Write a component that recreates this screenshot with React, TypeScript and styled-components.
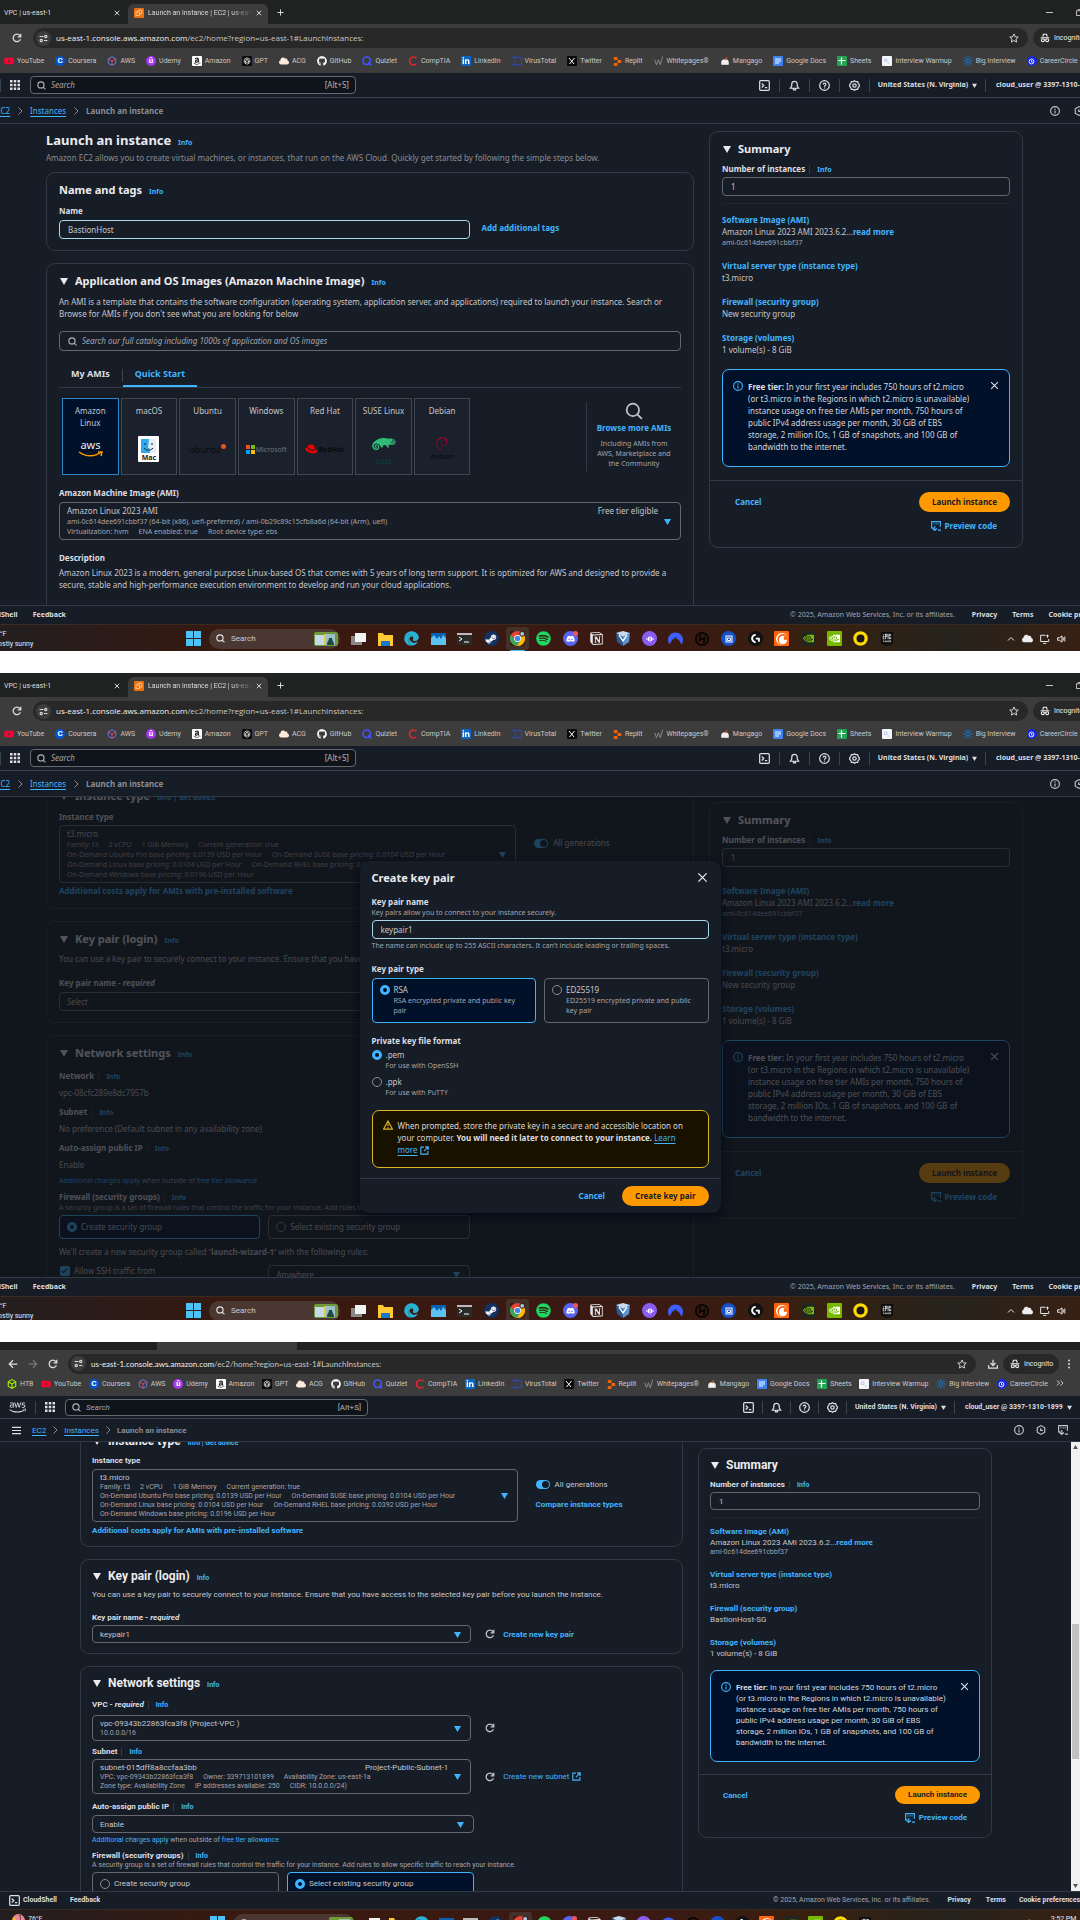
import React from 'react';
import styled, { createGlobalStyle, css, ThemeProvider } from 'styled-components';
import {
  FaYoutube, FaGithub, FaAmazon, FaLinkedinIn, FaAws, FaDiscord, FaSpotify, FaSteamSymbol,
  FaEdge, FaRedhat, FaSuse, FaCloud,
} from 'react-icons/fa';
import { SiNotion, SiCrunchyroll, SiNvidia, SiEpicgames, SiLogitechg, SiDebian, SiNordvpn, SiReplit } from 'react-icons/si';

/* ---------- themes: two browser zoom levels ---------- */

const regular = {
  font: '"Noto Sans", "Open Sans", sans-serif',
  urlFont: '"Open Sans", sans-serif',
  lh: 12, slh: 10, h2: 11, h2lh: 15, ctl: 19, btn: 20, pad: 12, gap: 12,
  cell: 30, region: 116, user: 94, header: 25, crumb: 26, crumbGap: 6,
  factsPad: '10px 0 13px', asidePad: 13,
  pagePad: '0 57px 0 46px', aside: 314, search: 326, taskPad: 186, taskWidth: 709, pill: 131,
};
const compact: typeof regular = {
  font: 'Roboto, "Noto Sans", sans-serif',
  urlFont: 'Lato, sans-serif',
  lh: 11, slh: 9, h2: 12, h2lh: 14, ctl: 18, btn: 18, pad: 11, gap: 12,
  cell: 28, region: 108, user: 125, header: 23, crumb: 23, crumbGap: 5,
  factsPad: '8px 0 11px', asidePad: 12,
  pagePad: '0 79px 0 80px', aside: 294, search: 303, taskPad: 210, taskWidth: 663, pill: 122,
};

const Global = createGlobalStyle`
  *, *::before, *::after { box-sizing: border-box; }
  body { margin: 0; background: #fff; }
  button, input, select { font: inherit; color: inherit; margin: 0; }
  h1, h2, p { margin: 0; }
  svg { display: block; flex: none; }
`;

const link = '#42b4ff';
const line = '#303944';
const ctlLine = '#656871';

/* ---------- icons ---------- */

type IcoProps = { size?: number; children: React.ReactNode; sw?: number; color?: string };
const Ico = ({ size = 10, sw = 2, color = 'currentColor', children }: IcoProps) => (
  <svg width={size} height={size} viewBox="0 0 16 16" fill="none" stroke={color} strokeWidth={sw} aria-hidden="true">{children}</svg>
);
const CloseIcon = ({ size = 10, sw = 2 }) => <Ico size={size} sw={sw}><path d="m2 2 12 12M14 2 2 14" /></Ico>;
const SearchIcon = ({ size = 10, sw = 2 }) => <Ico size={size} sw={sw}><circle cx="7" cy="7" r="5.5" /><path d="m11 11 4 4" /></Ico>;
const TermIcon = () => <Ico size={11} sw={1.8}><rect x="1" y="1" width="14" height="14" rx="1.5" /><path d="m4 5 3 3-3 3M8.500 11H12" /></Ico>;
const BellIcon = () => <Ico size={11} sw={1.8}><path d="M2 12h12l-2-3V6a4 4 0 0 0-8 0v3zM6.500 12.500v2h3v-2" /></Ico>;
const HelpIcon = () => <Ico size={11} sw={1.8}><circle cx="8" cy="8" r="7" /><path d="M6 6.500C6 4 10 4 10 6.500 10 8 8 8 8 9.800M8 11v1.500" /></Ico>;
const GearIcon = () => <Ico size={11} sw={1.8}><path d="m8 1 2 1.500 2.500-.2.800 2.500L15 7v2l-1.700 2.200-.8 2.500-2.500-.2L8 15l-2-1.500-2.500.2-.8-2.500L1 9V7l1.700-2.200.8-2.500 2.500.2z" /><circle cx="8" cy="8" r="2.500" /></Ico>;
const InfoIcon = ({ size = 10 }) => <Ico size={size} sw={1.8}><circle cx="8" cy="8" r="7" /><path d="M8 7v5M8 4v1.800" /></Ico>;
const ClockIcon = () => <Ico size={10} sw={1.8}><path d="m8 1 6 3.500v7L8 15l-6-3.500v-7z" /><path d="M7.500 5v3.500H11" /></Ico>;
const CodeIcon = () => <Ico size={10} sw={1.8}><path d="M4 11H1V1h14v8M6 15V8M2.500 12 6 15l3.500-3M4 4.500h1.500M7.500 4.500H9M10.500 4.500H12M11 14.500h5" /></Ico>;
const GridIcon = () => (
  <svg width="10" height="10" viewBox="0 0 16 16" fill="currentColor" aria-hidden="true">
    {[0, 6, 12].map(y => [0, 6, 12].map(x => <rect key={`${x}-${y}`} x={x} y={y} width="4" height="4" />))}
  </svg>
);
const Chevron = () => <Ico size={8} sw={2}><path d="m5 1 7 7-7 7" /></Ico>;
const Tri = ({ size = 8 }) => <svg width={size} height={size} viewBox="0 0 8 8" fill="currentColor" aria-hidden="true"><path d="M0 1h8L4 8z" /></svg>;
const ReloadIcon = ({ size = 10, sw = 2 }) => <Ico size={size} sw={sw}><path d="M13.500 10A6 6 0 1 1 12.500 4L14 5.500M14 1v5H9" /></Ico>;
const ExtIcon = () => <Ico size={9} sw={2}><path d="M7 2H1.500v12.500H14V9M9 1.500h5.500V7M14 2 7 9" /></Ico>;
const StarIcon = () => <Ico size={10} sw={1.5}><path d="m8 1.500 2 4.600 4.800.4-3.700 3.200 1.200 4.800L8 12l-4.300 2.500 1.200-4.800L1.200 6.500 6 6.100z" /></Ico>;
const TuneIcon = () => <Ico size={9} sw={2}><path d="M1 4.500h7M9 11.500h6" /><circle cx="12" cy="4.500" r="2" /><circle cx="4" cy="11.500" r="2" /></Ico>;
const SpyIcon = () => <Ico size={10} sw={1.8}><path d="M4.500 6 5.500 2h5l1 4M1 7.500h14" /><circle cx="4.500" cy="11.500" r="2.300" /><circle cx="11.500" cy="11.500" r="2.300" /><path d="M6.500 11h3" /></Ico>;
const WarnIcon = () => <Ico size={10} sw={1.8}><path d="M8 1.500 15 14.500H1zM8 6v4M8 11.500V13" /></Ico>;
const DownloadIcon = () => <Ico size={10} sw={2}><path d="M8 1v9M4 6.500 8 10.500l4-4M1 10v4.500h14V10" /></Ico>;

const Dot = styled.span<{ $bg: string; $round?: boolean; $fg?: string }>`
  width: 10px; height: 10px; flex: none;
  display: flex; align-items: center; justify-content: center;
  background: ${p => p.$bg}; color: ${p => p.$fg || '#fff'};
  border-radius: ${p => (p.$round ? '50%' : '1px')};
  font: 700 8px/10px Roboto, sans-serif;
`;

/* ---------- browser chrome ---------- */

const Page = styled.main`display: flex; flex-direction: column; gap: 22px;`;

const Shot = styled.article<{ $h: number }>`
  height: ${p => p.$h}px;
  overflow: hidden;
  display: flex; flex-direction: column;
  background: #161d26; color: #c6c6cd;
  font-family: ${p => p.theme.font};
  font-size: 8px; line-height: ${p => p.theme.lh}px;
  & > * { flex: none; }
`;

const TabStrip = styled.div<{ $h: number; $pad: number }>`
  height: ${p => p.$h}px; overflow: hidden;
  background: #202221; color: #dcdcdc;
  display: flex; align-items: flex-end;
  padding-left: ${p => p.$pad}px;
  font: 7px/10px Roboto, sans-serif;
`;
const Tab = styled.div<{ $active?: boolean }>`
  height: 20px; width: ${p => (p.$active ? 140 : 124)}px; flex: none;
  display: flex; align-items: center; gap: 4px; padding-bottom: 3px;
  border-radius: 6px 6px 0 0;
  background: ${p => (p.$active ? '#3c3c3c' : 'transparent')};
  padding-left: ${p => (p.$active ? 6 : 0)}px;
  padding-right: ${p => (p.$active ? 6 : 8)}px;
`;
const TabTitle = styled.span<{ $fade?: boolean }>`
  flex: 1; min-width: 0; white-space: nowrap; overflow: hidden;
  ${p => p.$fade && css`mask-image: linear-gradient(90deg, #000 80%, transparent);`}
`;
const Bare = styled.button`
  border: 0; padding: 0; background: none; display: flex; align-items: center; justify-content: center; gap: 4px; color: inherit; line-height: inherit; white-space: nowrap;
`;
const NewTab = styled(Bare)`width: 24px; height: 20px; padding-bottom: 3px;`;
const WinButtons = styled.div`margin-left: auto; width: 34px; height: 20px; display: flex; gap: 23px; align-items: center; overflow: hidden; padding-bottom: 3px;`;

const NavRow = styled.div<{ $compact?: boolean }>`
  height: ${p => (p.$compact ? 27 : 28)}px;
  background: #3c3c3c; color: #dcdcdc;
  display: flex; align-items: center; gap: 5px; overflow: hidden;
  padding-left: ${p => (p.$compact ? 8 : 12)}px;
  padding-right: ${p => (p.$compact ? 8 : 0)}px;
`;
const NavButtons = styled.div<{ $w: number; $end?: boolean }>`
  display: flex; gap: 10px; width: ${p => p.$w}px; flex: none; justify-content: ${p => (p.$end ? 'flex-end' : 'flex-start')};
`;
const UrlBar = styled.div`
  flex: 1; min-width: 0; height: 20px; border-radius: 10px; background: #282828;
  display: flex; align-items: center; gap: 5px; padding: 0 9px 0 3px;
`;
const TuneCircle = styled.span`width: 15px; height: 15px; border-radius: 50%; background: #3d3d3d; display: flex; align-items: center; justify-content: center;`;
const UrlText = styled.span`
  flex: 1; color: #c7c7c7; white-space: nowrap; overflow: hidden;
  font: 8px/12px ${p => p.theme.urlFont};
  b { font-weight: 400; color: #f0f0f0; }
`;
const Incognito = styled.span<{ $cut?: boolean }>`
  flex: none; height: 20px; border-radius: 10px; background: #282828;
  display: flex; align-items: center; gap: 4px; padding: 0 7px;
  width: ${p => (p.$cut ? 47 : 56)}px;
  ${p => p.$cut && css`border-radius: 10px 0 0 10px; overflow: hidden;`}
  font: 7px/10px Roboto, sans-serif; color: #ececec;
`;

const Bookmarks = styled.nav<{ $compact?: boolean }>`
  height: ${p => (p.$compact ? 19 : 21)}px; background: #3c3c3c; color: #c9c9c9;
  display: flex; justify-content: space-between; align-items: flex-start;
  padding: ${p => (p.$compact ? '2px 16px 0 7px' : '4px 2px 0 4px')};
  font: 7px/10px Roboto, sans-serif;
`;
const Bookmark = styled.a`display: flex; gap: 3px; align-items: center; color: inherit; text-decoration: none; white-space: nowrap;`;

const marks: [string, React.ReactNode][] = [
  ['YouTube', <FaYoutube size={10} color="#f03" />],
  ['Coursera', <Dot $bg="#0056d2" $round>C</Dot>],
  ['AWS', <Ico sw={1.6} color="#5b7be8"><path d="m8 1 6 3.500v7L8 15l-6-3.500v-7z" /><path stroke="#e0455e" d="M2 4.500 8 8l6-3.500M8 8v7" /></Ico>],
  ['Udemy', <Dot $bg="#a435f0" $round>û</Dot>],
  ['Amazon', <Dot $bg="#fff" $fg="#111"><FaAmazon size={8} /></Dot>],
  ['GPT', <Dot $bg="#0c0c0c" $fg="#ddd"><Ico size={8} sw={1.5}><path d="m8 1.500 5.500 3.200v6.600L8 14.500l-5.500-3.200V4.700zM5 3.500 11 7v6M11 3.500 5 7v6M2.500 8 8 11l5.500-3" /></Ico></Dot>],
  ['ACG', <FaCloud size={10} color="#ffe9db" />],
  ['GitHub', <FaGithub size={10} color="#fff" />],
  ['Quizlet', <Ico color="#4255ff" sw={2.5}><circle cx="7.500" cy="7.500" r="6" /><path d="m10 10 4.500 5" /></Ico>],
  ['CompTIA', <Ico color="#e0262d" sw={2.5}><path d="M13.500 3.500A6.500 6.500 0 1 0 13.500 12.500" /></Ico>],
  ['LinkedIn', <Dot $bg="#0a66c2"><FaLinkedinIn size={8} /></Dot>],
  ['VirusTotal', <Ico color="#2a49c9" sw={1.6}><path d="M1 2h14v12H1l6-6z" /></Ico>],
  ['Twitter', <Dot $bg="#0a0a0a"><Ico size={8} color="#fff" sw={2}><path d="m2 2 10 12M13 2 3 14" /></Ico></Dot>],
  ['Replit', <SiReplit size={9} color="#f26207" />],
  ['Whitepages®', <Ico color="#8d8d8d" sw={1.5}><path d="m1 6 3 8 3-8 3 8 4-13" /></Ico>],
  ['Mangago', <Ico color="#eee" sw={2}><path fill="#f6efe9" d="M3 10a5 4 0 0 1 10 0v3H3z" /><path stroke="#e0532b" d="m8 6 3-4" /></Ico>],
  ['Google Docs', <Dot $bg="#3f83f2"><Ico size={8} color="#fff" sw={2}><path d="M2 4h12M2 8h12M2 12h8" /></Ico></Dot>],
  ['Sheets', <Dot $bg="#23a455"><Ico size={8} color="#fff" sw={2.4}><path d="M1 7h14M7 1v14" /></Ico></Dot>],
  ['Interview Warmup', <Dot $bg="#f4f6fa"><Ico size={8} color="#b9cdf0" sw={2}><path d="M3 4h5v5H3zM9 12h4" /></Ico></Dot>],
  ['Big Interview', <Ico color="#1574c4" sw={1.8}><circle cx="8" cy="8" r="3" /><path d="M8 0v3M8 13v3M0 8h3M13 8h3M2.500 2.500l2 2M11.500 11.500l2 2M13.500 2.500l-2 2M4.500 11.500l-2 2" /></Ico>],
  ['CareerCircle', <Dot $bg="#1626e0" $round><Ico size={7} color="#fff" sw={2}><circle cx="8" cy="8" r="5.500" /><path d="M8 5v4h3" /></Ico></Dot>],
];

const Chrome = ({ small }: { small?: boolean }) => (
  <>
    <TabStrip $h={small ? 8 : 24} $pad={small ? 33 : 4}>
      <Tab>
        {!small && <><TabTitle>VPC | us-east-1</TabTitle><Bare aria-label="Close tab"><CloseIcon size={6} sw={2.5} /></Bare></>}
      </Tab>
      <Tab $active>
        {!small && (
          <>
            <Dot $bg="#ec7211"><Ico size={8} color="#ffd9a8" sw={1.5}><rect x="2" y="6" width="7" height="7" /><path d="M6 6V2.500h7.500V10H9" /></Ico></Dot>
            <TabTitle $fade>Launch an instance | EC2 | us-east-1</TabTitle>
            <Bare aria-label="Close tab"><CloseIcon size={6} sw={2.5} /></Bare>
          </>
        )}
      </Tab>
      {!small && (
        <>
          <NewTab aria-label="New tab"><Ico size={7} sw={2.2}><path d="M8 1v14M1 8h14" /></Ico></NewTab>
          <WinButtons><Ico size={7} sw={2}><path d="M0 8h16" /></Ico><Ico size={7} sw={2}><path d="M1 4h11v11H1zM4 1h11v11" /></Ico></WinButtons>
        </>
      )}
    </TabStrip>
    <NavRow $compact={small}>
      <NavButtons $w={small ? 55 : 16}>
        {small && <><Bare aria-label="Back"><Ico><path d="M15 8H2M8 2 2 8l6 6" /></Ico></Bare><Bare aria-label="Forward"><Ico color="#777"><path d="M1 8h13M8 2l6 6-6 6" /></Ico></Bare></>}
        <Bare aria-label="Reload"><ReloadIcon /></Bare>
      </NavButtons>
      <UrlBar>
        <TuneCircle><TuneIcon /></TuneCircle>
        <UrlText><b>us-east-1.console.aws.amazon.com</b>/ec2/home?region=us-east-1#LaunchInstances:</UrlText>
        <StarIcon />
      </UrlBar>
      {small && <NavButtons $w={17} $end><Bare aria-label="Downloads"><DownloadIcon /></Bare></NavButtons>}
      <Incognito $cut={!small}><SpyIcon />Incognito</Incognito>
      {small && <Bare aria-label="Menu"><svg width="8" height="10" viewBox="0 0 8 10" fill="currentColor"><circle cx="5" cy="1.500" r="1" /><circle cx="5" cy="5" r="1" /><circle cx="5" cy="8.500" r="1" /></svg></Bare>}
    </NavRow>
    <Bookmarks $compact={small} aria-label="Bookmarks">
      {small && <Bookmark href="#"><Ico color="#9fef00" sw={1.8}><path d="m8 1 6 3.500v7L8 15l-6-3.500v-7zM2 4.500 8 8l6-3.500M8 8v7" /></Ico>HTB</Bookmark>}
      {marks.map(([name, icon]) => <Bookmark key={name} href="#">{icon}{name}</Bookmark>)}
      {small && <Bookmark href="#" aria-label="More"><Ico size={8}><path d="m2 3 5 5-5 5M9 3l5 5-5 5" /></Ico></Bookmark>}
    </Bookmarks>
  </>
);

/* ---------- console header ---------- */

const Header = styled.header`
  height: ${p => p.theme.header}px; border-bottom: 1px solid #3b434e;
  display: flex; align-items: center; overflow: hidden; color: #dedee3;
`;
const HeaderLeft = styled.div<{ $w: number }>`width: ${p => p.$w}px; flex: none; display: flex; align-items: center; justify-content: flex-end; gap: 9px; padding-right: 10px;`;
const Rule = styled.span`width: 1px; height: 13px; background: #3b434e; flex: none;`;
const SearchBox = styled.label`
  width: ${p => p.theme.search}px; height: ${p => p.theme.ctl - 1}px; flex: none;
  border: 1px solid ${ctlLine}; border-radius: 4px; background: #0f141a;
  display: flex; align-items: center; gap: 5px; padding: 0 6px; color: #b4b4bb;
  input { flex: 1; min-width: 0; border: 0; padding: 0; background: none; outline: 0; }
  input::placeholder { color: #a4a4ad; font-style: italic; opacity: 1; }
`;
const HeaderRight = styled.div`margin-left: auto; display: flex; align-items: center; font-size: 7px; font-weight: 700; flex: none;`;
const IconCell = styled(Bare)`width: ${p => p.theme.cell}px; height: 13px; border-right: 1px solid #3b434e;`;
const RegionCell = styled(Bare)`width: ${p => p.theme.region}px; height: 13px; border-right: 1px solid #3b434e; font-weight: 700;`;
const UserCell = styled(Bare)`width: ${p => p.theme.user}px; height: 13px; justify-content: flex-start; padding-left: 10px; overflow: hidden; font-weight: 700;`;

const Crumbs = styled.nav<{ $cut?: boolean }>`
  height: ${p => p.theme.crumb}px; border-bottom: 1px solid #303944;
  display: flex; align-items: center; gap: ${p => p.theme.crumbGap}px; color: #8c8c94; font-weight: 700; overflow: hidden; white-space: nowrap;
  padding: ${p => (p.$cut ? '0' : '0 12px')};
`;
const CrumbLink = styled.a<{ $cut?: boolean }>`
  color: ${link}; font-weight: 400; text-decoration: underline; text-underline-offset: 2px; flex: none;
  margin-left: ${p => (p.$cut ? -4 : 0)}px;
`;
const MenuButton = styled(Bare)`color: #dedee3; margin-right: 6px;`;
const CrumbTools = styled.div<{ $cut?: boolean }>`margin-left: auto; display: flex; gap: ${p => (p.$cut ? 14 : 12)}px; color: #c6c6cd; width: ${p => (p.$cut ? 30 : 54)}px;`;

const ConsoleHeader = ({ small }: { small?: boolean }) => (
  <>
    <Header>
      <HeaderLeft $w={small ? 65 : 30}>{small && <><FaAws size={17} /><Rule /></>}{!small && <Rule />}<GridIcon /></HeaderLeft>
      <SearchBox><SearchIcon size={9} /><input type="search" placeholder="Search" aria-label="Search services" />[Alt+S]</SearchBox>
      <HeaderRight>
        <IconCell aria-label="CloudShell"><TermIcon /></IconCell>
        <IconCell aria-label="Notifications"><BellIcon /></IconCell>
        <IconCell aria-label="Help"><HelpIcon /></IconCell>
        <IconCell aria-label="Settings"><GearIcon /></IconCell>
        <RegionCell>United States (N. Virginia) <Tri size={5} /></RegionCell>
        <UserCell>cloud_user @ 3397-1310-1899 <Tri size={5} /></UserCell>
      </HeaderRight>
    </Header>
    <Crumbs $cut={!small} aria-label="Breadcrumb">
      {small && <MenuButton aria-label="Open menu"><Ico size={9}><path d="M0 2.500h16M0 8h16M0 13.500h16" /></Ico></MenuButton>}
      <CrumbLink href="#" $cut={!small}>EC2</CrumbLink><Chevron /><CrumbLink href="#">Instances</CrumbLink><Chevron />Launch an instance
      <CrumbTools $cut={!small}><InfoIcon /><ClockIcon />{small && <CodeIcon />}</CrumbTools>
    </Crumbs>
  </>
);

/* ---------- page parts ---------- */

const Viewport = styled.div<{ $h: number }>`height: ${p => p.$h}px; overflow: hidden; display: flex; position: relative;`;
const Content = styled.div`flex: 1; min-width: 0; display: flex; align-items: flex-start; gap: 15px; padding: ${p => p.theme.pagePad};`;
const MainCol = styled.div<{ $scroll?: number }>`
  flex: 1; min-width: 0; display: flex; flex-direction: column; gap: ${p => p.theme.gap}px;
  margin-top: ${p => -(p.$scroll || 0)}px;
`;
const Card = styled.section`
  border: 1px solid ${line}; border-radius: 9px; padding: 9px ${p => p.theme.pad}px ${p => p.theme.pad - 1}px;
`;
const TitleBlock = styled.div`padding-top: 7px; margin-bottom: -4px;`;
const H1 = styled.h1`font-size: 13px; line-height: 18px; color: #ebebf0; padding-bottom: 3px;`;
const H2 = styled.h2`
  display: flex; align-items: baseline; gap: 7px;
  font-size: ${p => p.theme.h2}px; line-height: ${p => p.theme.h2lh}px; color: #ebebf0; font-weight: 700;
`;
const TriWrap = styled.span`padding-left: 1px; display: flex; align-self: center;`;
const Info = styled.a`color: ${link}; font-size: 7px; line-height: 10px; font-weight: 700; text-decoration: none;`;
const InfoSep = styled(Info)`border-left: 1px solid ${line}; margin-left: 4px; padding-left: 7px;`;
const Label = styled.label`display: block; font-weight: 700; color: #dedee3; white-space: nowrap;`;
const Blue = styled.a<{ $bold?: boolean; $under?: boolean }>`
  color: ${link}; text-decoration: ${p => (p.$under ? 'underline' : 'none')}; text-underline-offset: 2px;
  font-weight: ${p => (p.$bold ? 700 : 400)}; white-space: nowrap;
`;
const Small = styled.p`font-size: 7px; line-height: ${p => p.theme.slh}px; color: #a4a4ad; white-space: nowrap;`;
const Stack = styled.div<{ $gap: number; $top?: number }>`display: flex; flex-direction: column; gap: ${p => p.$gap}px; padding-top: ${p => p.$top || 0}px;`;
const Row = styled.div<{ $gap: number; $start?: boolean }>`display: flex; align-items: ${p => (p.$start ? 'flex-start' : 'center')}; gap: ${p => p.$gap}px;`;
const Text = styled.p<{ $dim?: boolean }>`color: ${p => (p.$dim ? '#8c8c94' : 'inherit')};`;
const TextInput = styled.input<{ $focus?: boolean }>`
  width: 100%; height: ${p => p.theme.ctl}px; border-radius: 4px; outline: 0; background: #161d26;
  border: 1px solid ${p => (p.$focus ? '#a8d8ea' : ctlLine)}; padding: 0 8px; line-height: 12px;
`;
const Part = styled.div<{ $pct: number }>`width: ${p => p.$pct}%; flex: none;`;
const SelectWrap = styled.div`
  display: flex; align-items: center; border: 1px solid ${ctlLine}; border-radius: 4px;
  height: ${p => p.theme.ctl}px; padding-right: 9px; color: ${link};
`;
const NativeSelect = styled.select<{ $placeholder?: boolean }>`
  appearance: none; flex: 1; min-width: 0; border: 0; background: none; outline: 0; padding: 0 7px; color: #c6c6cd;
  font-style: ${p => (p.$placeholder ? 'italic' : 'normal')};
`;
const RichSelect = styled.button`
  width: 100%; display: flex; align-items: center; text-align: left; background: none;
  border: 1px solid ${ctlLine}; border-radius: 4px; padding: 2px 9px 2px 7px; line-height: inherit; color: ${link};
`;
const RichBody = styled.span`flex: 1; color: #c6c6cd; display: block;`;
const RichTop = styled.span`display: flex; justify-content: space-between; padding-right: 6px;`;
const RichLine = styled.span`display: flex; gap: 10px; font-size: 7px; line-height: ${p => p.theme.slh}px; color: #a4a4ad; white-space: nowrap;`;

const Picker = ({ id, options, placeholder }: { id: string; options: string[]; placeholder?: boolean }) => (
  <SelectWrap><NativeSelect id={id} $placeholder={placeholder}>{options.map(o => <option key={o}>{o}</option>)}</NativeSelect><Tri size={7} /></SelectWrap>
);

const Rich = ({ top, right, lines, label }: { top: string; right?: string; lines: string[][]; label: string }) => (
  <RichSelect type="button" aria-haspopup="listbox" aria-label={label}>
    <RichBody>
      <RichTop><span>{top}</span>{right && <span>{right}</span>}</RichTop>
      {lines.map((l, i) => <RichLine key={i}>{l.map(s => <span key={s}>{s}</span>)}</RichLine>)}
    </RichBody>
    <Tri size={7} />
  </RichSelect>
);

const RadioCard = styled.label<{ $on?: boolean; $tall?: boolean }>`
  flex: 1; display: flex; align-items: flex-start; gap: 4px; padding: 5px 7px ${p => (p.$tall ? 6 : 4)}px; border-radius: 4px; min-height: 24px;
  border: 1px solid ${p => (p.$on ? link : ctlLine)}; background: ${p => (p.$on ? '#001129' : 'transparent')};
`;
const Radio = styled.input.attrs({ type: 'radio' })`
  appearance: none; flex: none; width: 10px; height: 10px; margin: 1px 0 0; border-radius: 50%;
  border: 1px solid #8c8c94;
  &:checked { border: 3px solid ${link}; background: #001129; }
`;
const Check = styled.input.attrs({ type: 'checkbox' })`
  appearance: none; width: 10px; height: 10px; border-radius: 2px; background: ${link}; flex: none;
  &::after { content: ''; display: block; width: 3px; height: 6px; margin: 1px 3px; border: solid #001129; border-width: 0 1px 1px 0; transform: rotate(45deg); }
`;
const Toggle = styled.input.attrs({ type: 'checkbox' })`
  appearance: none; width: 14px; height: 9px; border-radius: 5px; background: ${link}; flex: none; padding: 1px;
  &::after { content: ''; display: block; width: 7px; height: 7px; margin-left: 5px; border-radius: 50%; background: #0f1b2a; }
`;

/* ---------- summary ---------- */

const Aside = styled.aside<{ $top: number }>`
  width: ${p => p.theme.aside}px; flex: none; margin-top: ${p => p.$top}px;
  border: 1px solid ${line}; border-radius: 9px;
`;
const AsideBody = styled.div`padding: 9px ${p => p.theme.pad}px ${p => p.theme.asidePad}px;`;
const Facts = styled.div`border-top: 1px solid #1e2630; margin-top: 7px; padding: ${p => p.theme.factsPad}; display: flex; flex-direction: column; gap: 12px;`;
const Alert = styled.div<{ $warn?: boolean }>`
  border: 1px solid ${p => (p.$warn ? '#dbb723' : link)}; background: ${p => (p.$warn ? '#191100' : '#001129')};
  border-radius: 7px; padding: ${p => (p.$warn ? '9px 10px 11px' : '11px 10px 13px')};
  display: flex; align-items: flex-start; gap: 5px; color: ${p => (p.$warn ? '#dbb723' : link)};
`;
const AlertText = styled.p`flex: 1; color: #d6d6dc; b { color: #dedee3; }`;
const AlertClose = styled(Bare)`color: #dedee3; width: 9px;`;
const AsideFoot = styled.div`
  border-top: 1px solid ${line}; padding: 11px ${p => p.theme.pad}px ${p => p.theme.asidePad + 2}px;
  display: flex; justify-content: space-between; align-items: flex-start;
`;
const FootRight = styled.div`display: flex; flex-direction: column; align-items: flex-end; gap: 8px;`;
const TextButton = styled(Bare)`color: ${link}; font-weight: 700; padding: 0 13px; height: ${p => p.theme.btn}px;`;
const CodeButton = styled(Bare)`color: ${link}; font-weight: 700; padding: 0 13px;`;
const Primary = styled.button`
  height: ${p => p.theme.btn}px; border: 0; border-radius: 10px; background: #f90; color: #161d26; font-weight: 700; padding: 0 13px; line-height: 12px; white-space: nowrap;
`;

const Summary = ({ id, group, top }: { id: string; group: string; top: number }) => (
  <Aside $top={top}>
    <AsideBody>
      <H2><TriWrap><Tri /></TriWrap>Summary</H2>
      <Stack $gap={2} $top={7}>
        <Label htmlFor={id}>Number of instances<InfoSep href="#">Info</InfoSep></Label>
        <TextInput id={id} defaultValue="1" />
      </Stack>
      <Facts>
        <div><Blue href="#" $bold>Software Image (AMI)</Blue><Text>Amazon Linux 2023 AMI 2023.6.2...<Blue href="#" $bold>read more</Blue></Text><Small>ami-0c614dee691cbbf37</Small></div>
        <div><Blue href="#" $bold>Virtual server type (instance type)</Blue><Text>t3.micro</Text></div>
        <div><Blue href="#" $bold>Firewall (security group)</Blue><Text>{group}</Text></div>
        <div><Blue href="#" $bold>Storage (volumes)</Blue><Text>1 volume(s) - 8 GiB</Text></div>
      </Facts>
      <Alert>
        <InfoIcon />
        <AlertText>
          <b>Free tier:</b> In your first year includes 750 hours of t2.micro<br />
          (or t3.micro in the Regions in which t2.micro is unavailable)<br />
          instance usage on free tier AMIs per month, 750 hours of<br />
          public IPv4 address usage per month, 30 GiB of EBS<br />
          storage, 2 million IOs, 1 GB of snapshots, and 100 GB of<br />
          bandwidth to the internet.
        </AlertText>
        <AlertClose aria-label="Dismiss"><CloseIcon size={9} /></AlertClose>
      </Alert>
    </AsideBody>
    <AsideFoot>
      <TextButton>Cancel</TextButton>
      <FootRight><Primary>Launch instance</Primary><CodeButton><CodeIcon /> Preview code</CodeButton></FootRight>
    </AsideFoot>
  </Aside>
);

/* ---------- footer and taskbar ---------- */

const Footer = styled.footer<{ $h: number }>`
  height: ${p => p.$h}px; border-top: 1px solid ${line}; display: flex; align-items: center; overflow: hidden;
  font-size: 7px; white-space: nowrap; color: #a4a4ad;
`;
const FootLink = styled.a<{ $ml: number }>`color: #dedee3; font-weight: 700; text-decoration: none; margin-left: ${p => p.$ml}px; display: flex; align-items: center; gap: 3px; flex: none;`;
const FootEnd = styled.div<{ $w: number }>`margin-left: auto; width: ${p => p.$w}px; display: flex; overflow: hidden;`;

const ConsoleFooter = ({ small, h }: { small?: boolean; h: number }) => (
  <Footer $h={h}>
    <FootLink href="#" $ml={small ? 9 : -19}>{small && <TermIcon />}CloudShell</FootLink>
    <FootLink href="#" $ml={small ? 13 : 15}>Feedback</FootLink>
    <FootEnd $w={small ? 307 : 290}>
      © 2025, Amazon Web Services, Inc. or its affiliates.
      <FootLink href="#" $ml={17}>Privacy</FootLink>
      <FootLink href="#" $ml={15}>Terms</FootLink>
      <FootLink href="#" $ml={small ? 13 : 15}>Cookie preferences</FootLink>
    </FootEnd>
  </Footer>
);

const TaskbarBox = styled.div`
  height: 28px; display: flex; align-items: center; color: #e8e8e8; overflow: hidden;
  background: linear-gradient(90deg, #231e20 0%, #38190f 22%, #3a1a13 62%, #38200f 75%, #26231d 88%, #382013 100%);
  font: 7px/10px Roboto, sans-serif; border-top: 1px solid #3a2a22;
`;
const Weather = styled.div<{ $cut?: boolean }>`
  width: ${p => p.theme.taskPad}px; flex: none; white-space: nowrap; display: flex; gap: 3px; line-height: 10px;
  padding-left: ${p => (p.$cut ? 0 : 12)}px; overflow: hidden;
`;
const WeatherText = styled.span<{ $cut?: boolean }>`margin-left: ${p => (p.$cut ? -8 : 0)}px;`;
const WeatherTemp = styled.span<{ $cut?: boolean }>`display: block;`;
const SunBadge = styled.span`width: 13px; height: 13px; border-radius: 50%; background: linear-gradient(45deg, #f5b52a 45%, #f2868c 45%); color: #222; text-align: right; padding-right: 3px; line-height: 9px;`;
const TaskIcons = styled.div`width: ${p => p.theme.taskWidth}px; flex: none; display: flex; align-items: center; justify-content: space-between;`;
const TaskLead = styled.div`display: flex; align-items: center; gap: 8px;`;
const TaskSearch = styled.label`
  width: ${p => p.theme.pill}px; height: 20px; border-radius: 10px; background: #4b3732; display: flex; align-items: center; gap: 6px; padding: 0 2px 0 7px; overflow: hidden;
  input { flex: 1; min-width: 0; border: 0; padding: 0; background: none; outline: 0; font: 8px/10px Roboto, sans-serif; }
  input::placeholder { color: #cfcaca; opacity: 1; }
`;
const AppButton = styled.button<{ $bg?: string; $fg?: string; $round?: boolean; $open?: boolean }>`
  width: 15px; height: 15px; border: 0; padding: 0; flex: none; display: flex; align-items: center; justify-content: center;
  background: ${p => p.$bg || 'transparent'}; color: ${p => p.$fg || '#fff'}; border-radius: ${p => (p.$round ? '50%' : '1px')};
  box-shadow: ${p => (p.$open ? '0 0 0 4px #45302a, 0 5px 0 0 #4cc2f7' : 'none')};
`;
const Tray = styled.div<{ $w: number }>`margin-left: auto; width: ${p => p.$w}px; flex: none; display: flex; align-items: center; gap: 7px; overflow: hidden; white-space: nowrap;`;
const Clock = styled.span`margin-left: 4px; text-align: right;`;

const apps: { name: string; icon: React.ReactNode; bg?: string; fg?: string; round?: boolean; open?: boolean }[] = [
  { name: 'Task view', icon: <svg width="15" height="14" viewBox="0 0 15 14"><rect x="0" y="4" width="11" height="9" fill="#8a8686" /><rect x="4" y="1" width="11" height="9" fill="#f2f2f2" /></svg> },
  { name: 'Explorer', icon: <svg width="15" height="14" viewBox="0 0 15 14"><path d="M0 1h5l1 2h9v11H0z" fill="#ffc933" /><path d="M3 9h9v5H3z" fill="#1577c9" /></svg> },
  { name: 'Edge', icon: <FaEdge size={15} />, fg: '#27b3d8' },
  { name: 'Monitor', icon: <svg width="15" height="12" viewBox="0 0 15 12"><rect width="15" height="12" fill="#0b5fb3" /><path d="M0 12V5l3-3 3 4 2-3 2 3 2-4 3 3v7z" fill="#5cc2f2" /></svg> },
  { name: 'Terminal', icon: <svg width="15" height="12" viewBox="0 0 15 12"><rect width="15" height="12" fill="#2b2b2b" /><rect width="15" height="2" fill="#bbb" /><path d="m2 4 3 2-3 2M7 9h5" stroke="#fff" fill="none" /></svg> },
  { name: 'Steam', icon: <FaSteamSymbol size={12} />, bg: '#12315e', round: true },
  { name: 'Chrome', icon: <svg width="15" height="15" viewBox="0 0 16 16"><circle cx="8" cy="8" r="8" fill="#ea4335" /><path d="M1 4a8 8 0 0 0 6.500 12L11 10H5z" fill="#34a853" /><path d="M8 4.500h7.200A8 8 0 0 1 7.500 16L11 10z" fill="#fbbc05" /><circle cx="8" cy="8" r="3.700" fill="#fff" /><circle cx="8" cy="8" r="2.900" fill="#4285f4" /><circle cx="13" cy="3" r="3" fill="#29323a" /><circle cx="13" cy="3" r="2" fill="#b9c7cf" /></svg>, open: true },
  { name: 'Spotify', icon: <FaSpotify size={15} />, fg: '#1ed760' },
  { name: 'Discord', icon: <svg width="15" height="15" viewBox="0 0 15 15"><circle cx="7.500" cy="7.500" r="7.500" fill="#5865f2" /><g transform="translate(3 3.500)"><FaDiscord size={9} color="#fff" /></g><circle cx="12.500" cy="2.500" r="2.500" fill="#f0575c" /></svg> },
  { name: 'Notion', icon: <SiNotion size={13} />, fg: '#e8e8e8' },
  { name: 'VirtualBox', icon: <svg width="14" height="15" viewBox="0 0 14 15"><path d="M0 2 7 0l7 2-7 4z" fill="#c4dcf3" /><path d="M0 2l7 4v9L1 11z" fill="#2a5a96" /><path d="M14 2 7 6v9l6-4z" fill="#5f92cc" /><path d="M3 4l4 6 4-6" stroke="#eef5fc" strokeWidth="1.500" fill="none" /></svg> },
  { name: 'Recorder', icon: <Ico size={8}><path d="M2 6v4M5 4v8M8 2v12M11 4v8M14 6v4" /></Ico>, bg: '#8b5cf0', round: true },
  { name: 'NordVPN', icon: <SiNordvpn size={15} />, fg: '#3e5fff' },
  { name: 'Hashcat', icon: <Ico size={14} color="#050505"><circle cx="8" cy="8" r="7" /><path d="M6 3 5 11M11 5l-1 8M5 9l6-2" /></Ico> },
  { name: 'Files', icon: <Ico size={8}><rect x="2" y="2" width="12" height="12" /><path d="M5 6h6v5H5z" /></Ico>, bg: '#1550c8', round: true },
  { name: 'Logitech', icon: <SiLogitechg size={9} />, bg: '#111', round: true },
  { name: 'Crunchyroll', icon: <SiCrunchyroll size={12} />, bg: '#ff640a' },
  { name: 'GeForce', icon: <SiNvidia size={11} />, bg: '#23261f', fg: '#76b900' },
  { name: 'Nvidia', icon: <SiNvidia size={11} />, bg: '#76b900' },
  { name: 'Ring', icon: <Ico size={15} color="#ffd900" sw={3.5}><circle cx="8" cy="8" r="6" /></Ico>, bg: '#161616', round: true },
  { name: 'Epic', icon: <SiEpicgames size={14} />, fg: '#0c0c0c', bg: 'radial-gradient(#ddd 50%, transparent 55%)' },
];

const SearchArt = () => (
  <svg width="24" height="14" viewBox="0 0 24 14"><rect width="24" height="14" rx="2" fill="#6f9a3c" /><rect x="1" y="3" width="9" height="10" fill="#c3dbe8" /><rect x="12" y="2" width="9" height="11" fill="#9cc0c8" /><path d="M13 13c0-4 2-4 2-7h3c0 3 2 3 2 7z" fill="#1d4a40" /><path d="M10 2h2v11h-2z" fill="#e3c64a" /></svg>
);

const Taskbar = ({ small }: { small?: boolean }) => (
  <TaskbarBox>
    <Weather $cut={!small}>
      {small && <SunBadge>1</SunBadge>}
      <WeatherText $cut={!small}>
        <WeatherTemp>76°F</WeatherTemp>
        Mostly sunny
      </WeatherText>
    </Weather>
    <TaskIcons>
      <TaskLead>
        <AppButton aria-label="Start"><svg width="15" height="15" viewBox="0 0 15 15" fill="#4cc2f7"><path d="M0 0h7v7H0zM8 0h7v7H8zM0 8h7v7H0zM8 8h7v7H8z" /></svg></AppButton>
        <TaskSearch><SearchIcon size={9} /><input placeholder="Search" aria-label="Search Windows" /><SearchArt /></TaskSearch>
      </TaskLead>
      {apps.map(a => <AppButton key={a.name} aria-label={a.name} $bg={a.bg} $fg={a.fg} $round={a.round} $open={a.open}>{a.icon}</AppButton>)}
    </TaskIcons>
    <Tray $w={small ? 70 : 73}>
      <Ico size={8}><path d="m2 11 6-6 6 6" /></Ico>
      <FaCloud size={11} color="#eee" />
      {!small && <Ico size={10} sw={1.6}><path d="M9 2H1v10h13V8M5 15h5M12 1v5M10 3h4" /></Ico>}
      {!small && <Ico size={10} sw={1.6}><path d="M1 6v4h3l4 3V3L4 6zM10 5.500v5M12.500 4v8" /></Ico>}
      {small && <Clock>3:52 PM<br />4/2/2025</Clock>}
    </Tray>
  </TaskbarBox>
);

/* ---------- first screen ---------- */

const Tabs = styled.div`display: flex; align-items: center; border-bottom: 1px solid ${line}; margin-top: 12px;`;
const TabBtn = styled.button<{ $on?: boolean }>`
  height: 24px; padding: 0 12px; border: 0; background: none; font-weight: 700; font-size: 9px; line-height: 12px; white-space: nowrap;
  color: ${p => (p.$on ? link : '#dedee3')};
  border-bottom: 2px solid ${p => (p.$on ? link : 'transparent')};
`;
const OsRow = styled.div`display: flex; justify-content: space-between; align-items: center; padding: 10px 0 0 3px;`;
const OsTiles = styled.div`display: flex; gap: 2px; width: 66%;`;
const OsTile = styled.button<{ $on?: boolean }>`
  flex: 1 1 0; min-width: 0; height: 77px; padding: 6px 0 0; line-height: 12px;
  display: flex; flex-direction: column; align-items: center; justify-content: flex-start;
  border: 1px solid ${p => (p.$on ? '#2f86c4' : '#424650')}; background: ${p => (p.$on ? '#001129' : '#1a212c')};
`;
const OsName = styled.span`height: 24px;`;
const OsLogo = styled.span<{ $c?: string; $col?: boolean; $s?: number }>`
  height: 40px; display: flex; flex-direction: ${p => (p.$col ? 'column' : 'row')}; align-items: center; justify-content: center; gap: 1px;
  color: ${p => p.$c || '#0a0a0a'}; font-size: ${p => p.$s || 7}px; line-height: 9px;
`;
const MacBox = styled.span`background: #fff; border-radius: 1px; padding: 3px 3px 0; color: #222; font: 700 7px/9px "Noto Sans", sans-serif;`;
const Browse = styled.div`
  width: 95px; height: 69px; border-left: 1px solid ${line}; text-align: center; display: flex; flex-direction: column; align-items: center;
`;
const BrowseLink = styled(Blue)`padding: 2px 0 5px;`;
const CatalogSearch = styled(SearchBox)`width: 100%; height: 20px; background: #161d26; margin-top: 11px; padding-left: 8px;`;

const ScreenOne = () => (
  <Shot $h={651}>
    <Chrome />
    <ConsoleHeader />
    <Viewport $h={481}>
      <Content>
        <MainCol>
          <TitleBlock>
            <H1>Launch an instance &nbsp;<Info href="#">Info</Info></H1>
            <Text $dim>Amazon EC2 allows you to create virtual machines, or instances, that run on the AWS Cloud. Quickly get started by following the simple steps below.</Text>
          </TitleBlock>
          <Card>
            <H2>Name and tags<Info href="#">Info</Info></H2>
            <Row $gap={12} $start>
              <Part $pct={66}><Stack $gap={3} $top={8}><Label htmlFor="name">Name</Label><TextInput id="name" $focus defaultValue="BastionHost" /></Stack></Part>
              <Stack $gap={0} $top={25}><Blue href="#" $bold>Add additional tags</Blue></Stack>
            </Row>
          </Card>
          <Card>
            <H2><TriWrap><Tri /></TriWrap>Application and OS Images (Amazon Machine Image)<Info href="#">Info</Info></H2>
            <Stack $gap={0} $top={8}>
              <Text>An AMI is a template that contains the software configuration (operating system, application server, and applications) required to launch your instance. Search or<br />Browse for AMIs if you don't see what you are looking for below</Text>
            </Stack>
            <CatalogSearch><SearchIcon size={9} /><input type="search" aria-label="Search AMIs" placeholder="Search our full catalog including 1000s of application and OS images" /></CatalogSearch>
            <Tabs role="tablist"><TabBtn role="tab">My AMIs</TabBtn><Rule /><TabBtn role="tab" $on>Quick Start</TabBtn></Tabs>
            <OsRow>
              <OsTiles>
                <OsTile $on><OsName>Amazon<br />Linux</OsName><OsLogo $c="#fff"><svg width="25" height="16" viewBox="0 0 25 16"><text x="12.500" y="8" textAnchor="middle" fontSize="11" fontFamily="Noto Sans" fill="#e8ecf2">aws</text><path d="M1 11c7 5 16 5 22 0M20 11h4l-1 4" stroke="#f90" strokeWidth="1.500" fill="none" /></svg></OsLogo></OsTile>
                <OsTile><OsName>macOS</OsName><OsLogo><MacBox><svg width="15" height="14" viewBox="0 0 15 14"><rect width="15" height="14" fill="#2fa8ee" /><path d="M8 0h7v14H9l-.5-5H7z" fill="#e4eef6" /><path d="M4 4v2M11 4v2M3 9c3 3 6 3 9 0" stroke="#123" fill="none" /></svg>Mac</MacBox></OsLogo></OsTile>
                <OsTile><OsName>Ubuntu</OsName><OsLogo $s={9}>ubuntu<svg width="5" height="10" viewBox="0 0 5 10"><circle cx="2.500" cy="2.500" r="2.500" fill="#e95420" /></svg></OsLogo></OsTile>
                <OsTile><OsName>Windows</OsName><OsLogo $c="#737373"><svg width="9" height="9" viewBox="0 0 9 9"><path fill="#f25022" d="M0 0h4v4H0z" /><path fill="#7fba00" d="M5 0h4v4H5z" /><path fill="#00a4ef" d="M0 5h4v4H0z" /><path fill="#ffb900" d="M5 5h4v4H5z" /></svg>Microsoft</OsLogo></OsTile>
                <OsTile><OsName>Red Hat</OsName><OsLogo><FaRedhat size={12} color="#e00" /><b>RedHat</b></OsLogo></OsTile>
                <OsTile><OsName>SUSE Linux</OsName><OsLogo $col $c="#103a38"><FaSuse size={24} color="#30ba78" /><b>SUSE</b></OsLogo></OsTile>
                <OsTile><OsName>Debian</OsName><OsLogo $col><SiDebian size={14} color="#a80030" />debian</OsLogo></OsTile>
              </OsTiles>
              <Browse><SearchIcon size={18} sw={1.5} /><BrowseLink href="#" $bold>Browse more AMIs</BrowseLink><Small>Including AMIs from<br />AWS, Marketplace and<br />the Community</Small></Browse>
            </OsRow>
            <Stack $gap={3} $top={12}>
              <Label as="div">Amazon Machine Image (AMI)</Label>
              <Rich label="Amazon Machine Image" top="Amazon Linux 2023 AMI" right="Free tier eligible" lines={[['ami-0c614dee691cbbf37 (64-bit (x86), uefi-preferred) / ami-0b29c89c15cfb8a6d (64-bit (Arm), uefi)'], ['Virtualization: hvm', 'ENA enabled: true', 'Root device type: ebs']]} />
            </Stack>
            <Stack $gap={3} $top={12}>
              <Label as="div">Description</Label>
              <Text>Amazon Linux 2023 is a modern, general purpose Linux-based OS that comes with 5 years of long term support. It is optimized for AWS and designed to provide a<br />secure, stable and high-performance execution environment to develop and run your cloud applications.</Text>
            </Stack>
            <Stack $gap={0} $top={40}>{null}</Stack>
          </Card>
        </MainCol>
        <Summary id="count-1" group="New security group" top={7} />
      </Content>
    </Viewport>
    <ConsoleFooter h={19} />
    <Taskbar />
  </Shot>
);

/* ---------- instance type card shared by the later screens ---------- */

const InstanceCard = ({ compare }: { compare?: boolean }) => (
  <Card>
    <H2><TriWrap><Tri /></TriWrap>Instance type<Info href="#">Info | Get advice</Info></H2>
    <Row $gap={18} $start>
      <Part $pct={73.5}>
        <Stack $gap={compare ? 3 : 2} $top={compare ? 7 : 8}>
          <Label as="div">Instance type</Label>
          <Rich label="Instance type" top="t3.micro" lines={[
            ['Family: t3', '2 vCPU', '1 GiB Memory', 'Current generation: true'],
            ['On-Demand Ubuntu Pro base pricing: 0.0139 USD per Hour', 'On-Demand SUSE base pricing: 0.0104 USD per Hour'],
            ['On-Demand Linux base pricing: 0.0104 USD per Hour', 'On-Demand RHEL base pricing: 0.0392 USD per Hour'],
            ['On-Demand Windows base pricing: 0.0196 USD per Hour'],
          ]} />
          <Blue href="#" $bold>Additional costs apply for AMIs with pre-installed software</Blue>
        </Stack>
      </Part>
      <Stack $gap={9} $top={compare ? 31 : 34}>
        <Row as="label" $gap={5}><Toggle defaultChecked />All generations</Row>
        {compare && <Blue href="#" $bold>Compare instance types</Blue>}
      </Stack>
    </Row>
  </Card>
);

const KeyText = () => <Text>You can use a key pair to securely connect to your instance. Ensure that you have access to the selected key pair before you launch the instance.</Text>;

/* ---------- second screen ---------- */

const Overlay = styled.div`
  position: absolute; inset: 0; background: rgba(15, 19, 24, 0.7);
  display: flex; justify-content: center; align-items: center;
`;
const Modal = styled.div`width: 361px; background: #161d26; border-radius: 9px; box-shadow: 0 3px 10px rgba(0, 7, 22, 0.8);`;
const ModalHead = styled.div`display: flex; justify-content: space-between; align-items: center; padding: 9px 13px 6px 12px; color: #ebebf0;`;
const ModalBody = styled.div`padding: 5px 12px 10px;`;
const ModalFoot = styled.div`border-top: 1px solid ${line}; display: flex; justify-content: flex-end; gap: 4px; padding: 7px 12px;`;
const RadioPlain = styled.label`display: flex; gap: 4px; align-items: flex-start; padding-bottom: 3px;`;
const Half = styled.div`padding-left: 1px; flex: 1;`;

const KeyPairModal = () => (
  <Overlay>
    <Modal role="dialog" aria-label="Create key pair">
      <ModalHead><H2>Create key pair</H2><Bare aria-label="Close"><CloseIcon size={11} sw={1.8} /></Bare></ModalHead>
      <ModalBody>
        <Label htmlFor="kp">Key pair name</Label>
        <Small>Key pairs allow you to connect to your instance securely.</Small>
        <Stack $gap={2} $top={2}>
          <TextInput id="kp" $focus defaultValue="keypair1" />
          <Small>The name can include up to 255 ASCII characters. It can't include leading or trailing spaces.</Small>
        </Stack>
        <Stack $gap={3} $top={12}>
          <Label as="div">Key pair type</Label>
          <Row $gap={8}>
            <RadioCard $on $tall><Radio name="kt" defaultChecked /><div>RSA<Small>RSA encrypted private and public key<br />pair</Small></div></RadioCard>
            <RadioCard $tall><Radio name="kt" /><div>ED25519<Small>ED25519 encrypted private and public<br />key pair</Small></div></RadioCard>
          </Row>
        </Stack>
        <Stack $gap={2} $top={12}>
          <Label as="div">Private key file format</Label>
          <RadioPlain><Radio name="kf" defaultChecked /><div>.pem<Small>For use with OpenSSH</Small></div></RadioPlain>
          <RadioPlain><Radio name="kf" /><div>.ppk<Small>For use with PuTTY</Small></div></RadioPlain>
        </Stack>
        <Stack $gap={0} $top={9}>
          <Alert $warn>
            <WarnIcon />
            <AlertText>When prompted, store the private key in a secure and accessible location on<br />your computer. <b>You will need it later to connect to your instance.</b> <Blue href="#" $under>Learn</Blue><br /><Row as="span" $gap={3}><Blue href="#" $under>more</Blue><Blue href="#" aria-label="External"><ExtIcon /></Blue></Row></AlertText>
          </Alert>
        </Stack>
      </ModalBody>
      <ModalFoot><TextButton>Cancel</TextButton><Primary>Create key pair</Primary></ModalFoot>
    </Modal>
  </Overlay>
);

const ScreenTwo = () => (
  <Shot $h={647}>
    <Chrome />
    <ConsoleHeader />
    <Viewport $h={480}>
      <Content>
        <MainCol $scroll={19}>
          <InstanceCard />
          <Card>
            <H2><TriWrap><Tri /></TriWrap>Key pair (login)<Info href="#">Info</Info></H2>
            <Stack $gap={12} $top={7}>
              <KeyText />
              <Part $pct={66}><Stack $gap={3}><Label htmlFor="kp2">Key pair name - <i>required</i></Label><Picker id="kp2" options={['Select']} placeholder /></Stack></Part>
            </Stack>
          </Card>
          <Card>
            <H2><TriWrap><Tri /></TriWrap>Network settings<Info href="#">Info</Info></H2>
            <Stack $gap={7} $top={10}>
              <Stack $gap={5}><Label as="div">Network<InfoSep href="#">Info</InfoSep></Label><Text>vpc-08cfc289e8dc7957b</Text></Stack>
              <Stack $gap={5}><Label as="div">Subnet<InfoSep href="#">Info</InfoSep></Label><Text>No preference (Default subnet in any availability zone)</Text></Stack>
              <Stack $gap={5}>
                <Label as="div">Auto-assign public IP<InfoSep href="#">Info</InfoSep></Label><Text>Enable</Text>
                <Small><Blue href="#">Additional charges apply</Blue> when outside of <Blue href="#">free tier allowance</Blue></Small>
                <div><Label as="div">Firewall (security groups)<InfoSep href="#">Info</InfoSep></Label>
                  <Small>A security group is a set of firewall rules that control the traffic for your instance. Add rules to allow specific traffic to reach your instance.</Small>
                  <Part $pct={66}><Stack $gap={0} $top={2}><Row $gap={8}>
                    <RadioCard $on><Radio name="sg2" defaultChecked />Create security group</RadioCard>
                    <RadioCard><Radio name="sg2" />Select existing security group</RadioCard>
                  </Row></Stack></Part>
                </div>
              </Stack>
              <Text>We'll create a new security group called <b>'launch-wizard-1'</b> with the following rules:</Text>
              <Part $pct={66}><Row $gap={8} $start>
                <Half as="label"><Row as="span" $gap={4}><Check defaultChecked />Allow SSH traffic from</Row></Half>
                <Part $pct={49}><Picker id="ssh" options={['Anywhere']} /></Part>
              </Row></Part>
            </Stack>
          </Card>
        </MainCol>
        <Summary id="count-2" group="New security group" top={5} />
      </Content>
      <KeyPairModal />
    </Viewport>
    <ConsoleFooter h={19} />
    <Taskbar />
  </Shot>
);

/* ---------- third screen ---------- */

const ScrollTrack = styled.div`width: 9px; flex: none; background: #f1f1f1; color: #555; display: flex; flex-direction: column; align-items: center; padding: 3px 0;`;
const ScrollSpace = styled.span<{ $grow: number }>`flex: ${p => p.$grow} 0 0;`;
const Thumb = styled.span`flex: 136 0 0; width: 7px; background: #c1c1c1;`;

const ScreenThree = () => (
  <Shot $h={578}>
    <Chrome small />
    <ConsoleHeader small />
    <Viewport $h={449}>
      <Content>
        <MainCol $scroll={18}>
          <InstanceCard compare />
          <Card>
            <H2><TriWrap><Tri /></TriWrap>Key pair (login)<Info href="#">Info</Info></H2>
            <Stack $gap={12} $top={6}>
              <KeyText />
              <Stack $gap={2}>
                <Label htmlFor="kp3">Key pair name - <i>required</i></Label>
                <Row $gap={14}><Part $pct={65.5}><Picker id="kp3" options={['keypair1']} /></Part><Row $gap={8}><Bare aria-label="Refresh"><ReloadIcon /></Bare><Blue href="#" $bold>Create new key pair</Blue></Row></Row>
              </Stack>
            </Stack>
          </Card>
          <Card>
            <H2><TriWrap><Tri /></TriWrap>Network settings<Info href="#">Info</Info></H2>
            <Stack $gap={5} $top={9}>
              <Stack $gap={5}>
                <Label as="div">VPC - <i>required</i><InfoSep href="#">Info</InfoSep></Label>
                <Row $gap={14}><Part $pct={65.5}><Rich label="VPC" top="vpc-09343b22863fca3f8 (Project-VPC )" lines={[['10.0.0.0/16']]} /></Part><Bare aria-label="Refresh"><ReloadIcon /></Bare></Row>
              </Stack>
              <Stack $gap={2}>
                <Label as="div">Subnet<InfoSep href="#">Info</InfoSep></Label>
                <Row $gap={14}>
                  <Part $pct={65.5}><Rich label="Subnet" top="subnet-015dff8a8ccfaa3bb" right="Project-Public-Subnet-1" lines={[['VPC: vpc-09343b22863fca3f8', 'Owner: 339713101899', 'Availability Zone: us-east-1a'], ['Zone type: Availability Zone', 'IP addresses available: 250', 'CIDR: 10.0.0.0/24)']]} /></Part>
                  <Row $gap={8}><Bare aria-label="Refresh"><ReloadIcon /></Bare><Row $gap={3}><Blue href="#">Create new subnet</Blue><Blue href="#" aria-label="External"><ExtIcon /></Blue></Row></Row>
                </Row>
              </Stack>
              <Part $pct={66}><Stack $gap={3} $top={2}>
                <Label htmlFor="ip">Auto-assign public IP<InfoSep href="#">Info</InfoSep></Label>
                <Picker id="ip" options={['Enable']} />
                <Small><Blue href="#">Additional charges apply</Blue> when outside of <Blue href="#">free tier allowance</Blue></Small>
              </Stack></Part>
              <div>
                <Label as="div">Firewall (security groups)<InfoSep href="#">Info</InfoSep></Label>
                <Small>A security group is a set of firewall rules that control the traffic for your instance. Add rules to allow specific traffic to reach your instance.</Small>
                <Part $pct={66}><Stack $gap={0} $top={2}><Row $gap={8}>
                  <RadioCard><Radio name="sg3" />Create security group</RadioCard>
                  <RadioCard $on><Radio name="sg3" defaultChecked />Select existing security group</RadioCard>
                </Row></Stack></Part>
              </div>
            </Stack>
          </Card>
        </MainCol>
        <Summary id="count-3" group="BastionHost-SG" top={6} />
      </Content>
      <ScrollTrack aria-hidden="true">
        <svg width="5" height="4" viewBox="0 0 5 4" fill="currentColor"><path d="M0 4h5L2.500 0z" /></svg>
        <ScrollSpace $grow={176} /><Thumb /><ScrollSpace $grow={126} />
        <svg width="5" height="4" viewBox="0 0 5 4" fill="currentColor"><path d="M0 0h5L2.500 4z" /></svg>
      </ScrollTrack>
    </Viewport>
    <ConsoleFooter small h={18} />
    <Taskbar small />
  </Shot>
);

export default function App() {
  return (
    <Page>
      <Global />
      <ThemeProvider theme={regular}><ScreenOne /></ThemeProvider>
      <ThemeProvider theme={regular}><ScreenTwo /></ThemeProvider>
      <ThemeProvider theme={compact}><ScreenThree /></ThemeProvider>
    </Page>
  );
}
